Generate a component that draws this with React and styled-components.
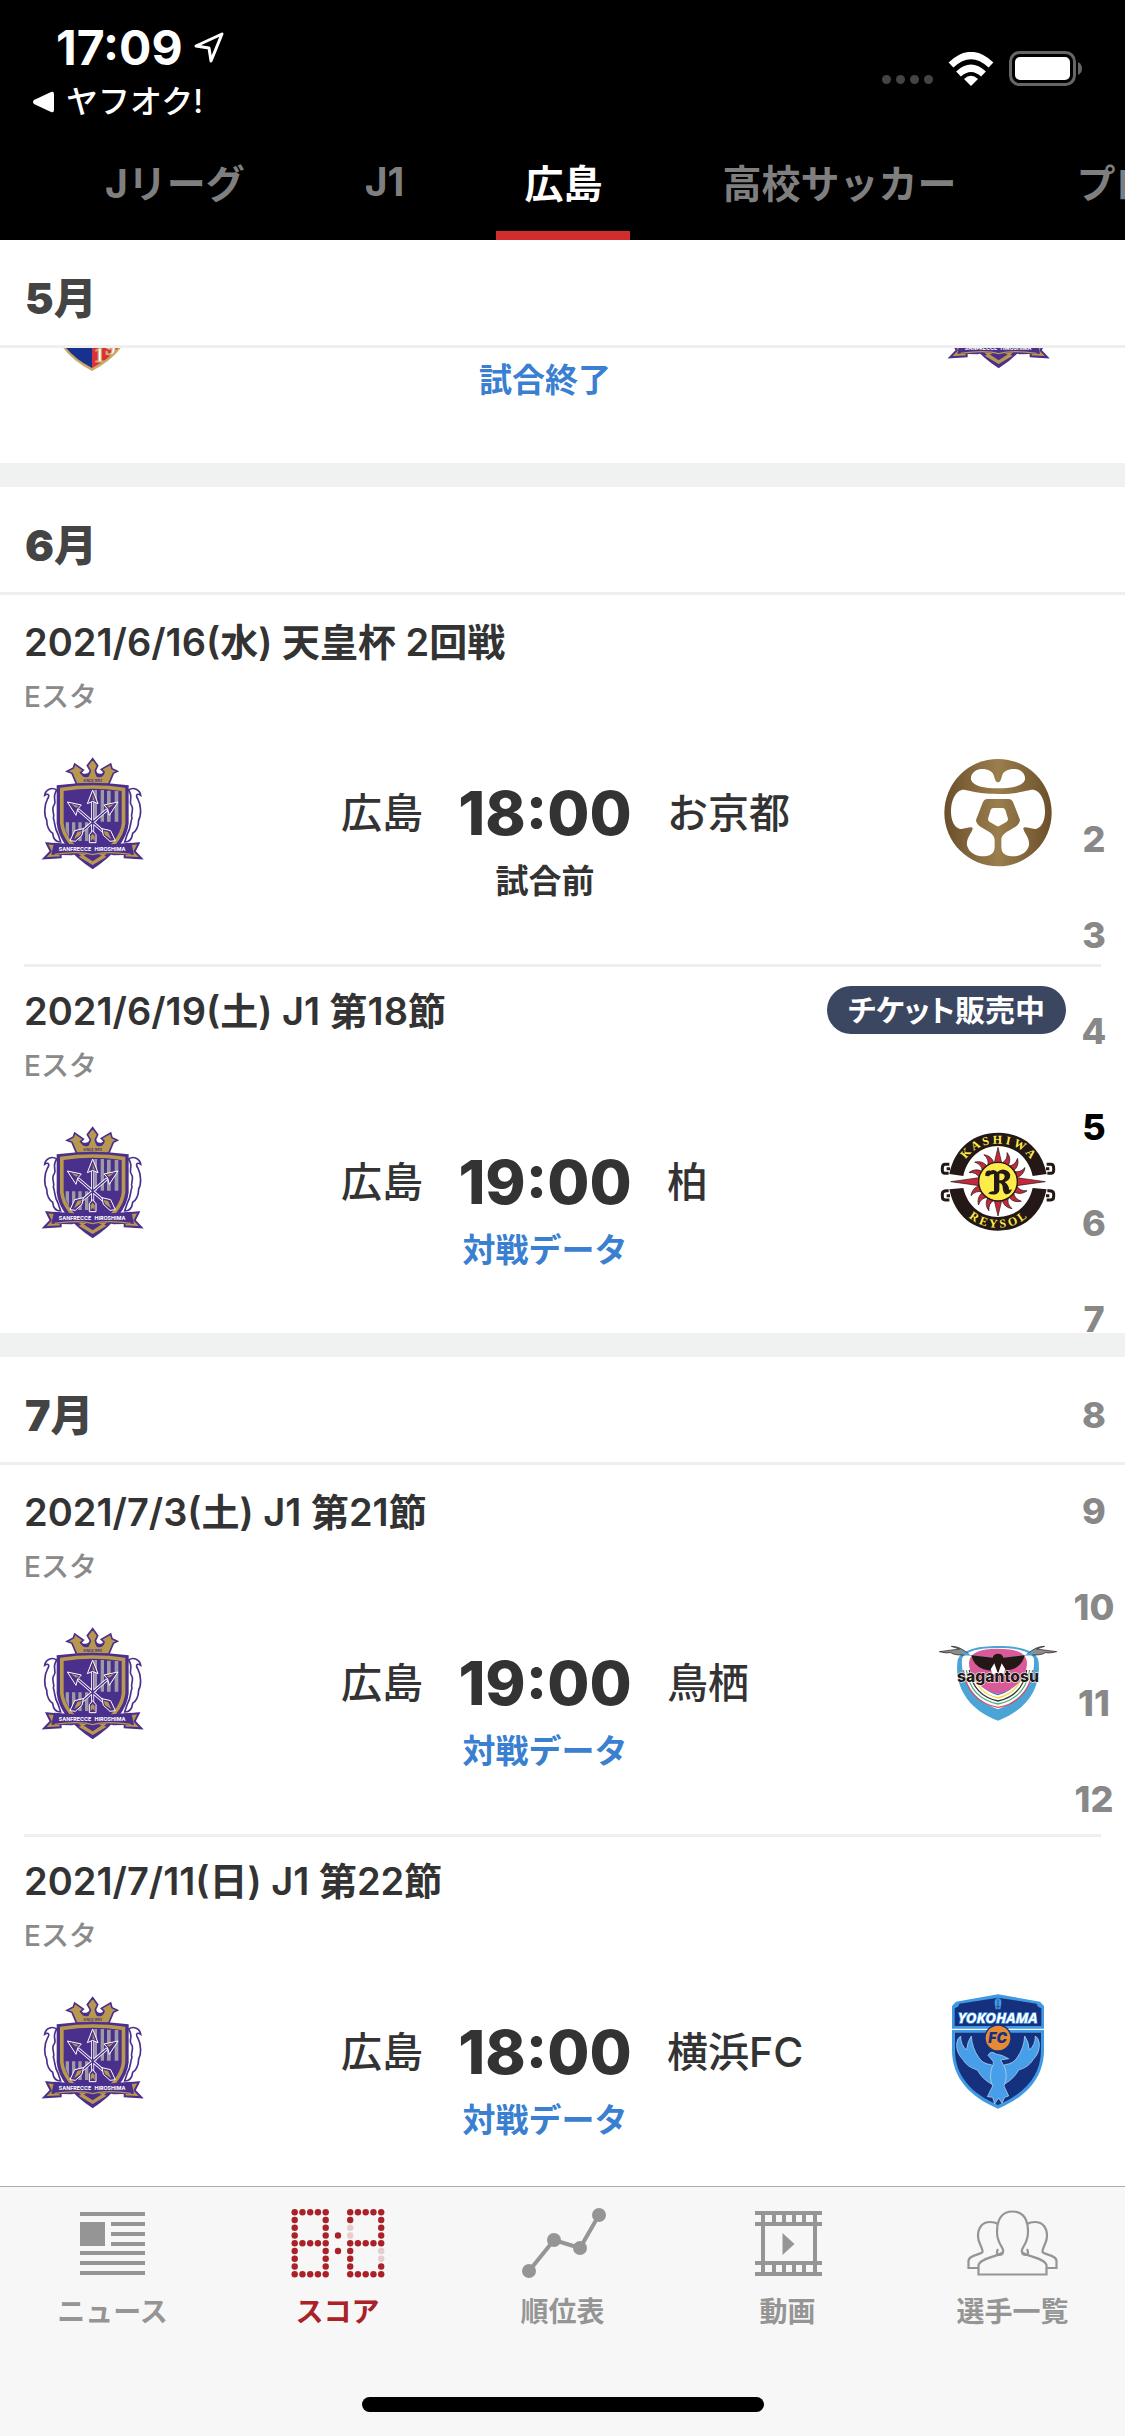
import React from "react";
import styled, { createGlobalStyle, css } from "styled-components";

const GlobalStyle = createGlobalStyle`
  * {
    box-sizing: border-box;
  }

  body {
    margin: 0;
    background: #fff;
    color: #333;
    font-family: Inter, "Noto Sans CJK JP", sans-serif;
  }

  button {
    border: 0;
    padding: 0;
    background: none;
    font-family: inherit;
    cursor: pointer;
  }

  a {
    text-decoration: none;
  }
`;

const Screen = styled.div`
  display: flex;
  flex-direction: column;
  height: 100vh;
  overflow: hidden;
`;

const TopBar = styled.header`
  flex: none;
  background: #000;
  color: #fff;
`;

const StatusBar = styled.div`
  display: flex;
  justify-content: space-between;
  height: 140px;
  padding: 20px 42px 0 32px;
`;

const StatusLeft = styled.div`
  display: flex;
  flex-direction: column;
`;

const Clock = styled.div`
  display: flex;
  align-items: center;
  gap: 10px;
  padding-left: 24px;
  font-size: 48px;
  font-weight: 700;
  line-height: 56px;
`;

const BackLink = styled.a`
  display: flex;
  align-items: center;
  gap: 12px;
  color: #fff;
  font-size: 32px;
  font-weight: 500;
  line-height: 52px;
`;

const StatusRight = styled.div`
  display: flex;
  align-items: flex-end;
  gap: 15px;
  height: 66px;
`;

const SignalDots = styled.div`
  display: flex;
  gap: 5px;
  padding-bottom: 2px;

  span {
    width: 9px;
    height: 9px;
    border-radius: 50%;
    background: #444;
  }
`;

const Tabs = styled.nav`
  display: flex;
  gap: 64px;
  height: 100px;
  padding-left: 77px;
  overflow: hidden;
`;

const Tab = styled.button`
  flex: none;
  padding: 0 28px 9px;
  border-bottom: 9px solid ${({ $active }) => ($active ? "#d22d2d" : "transparent")};
  color: ${({ $active }) => ($active ? "#fff" : "#7f7f7f")};
  font-size: 39px;
  font-weight: 700;
  white-space: nowrap;
`;

const Content = styled.main`
  position: relative;
  flex: 1;
  min-height: 0;
  overflow: hidden;
`;

const Month = styled.section`
  border-bottom: 24px solid #f0f2f1;
`;

const MonthTitle = styled.h2`
  height: 108px;
  margin: 0;
  padding: 6px 25px 0;
  border-bottom: 3px solid #efefef;
  color: #444;
  font-size: 43px;
  font-weight: 900;
  line-height: 104px;
`;

// the last match of the month is still partly scrolled under its title
const Scrolled = styled.div`
  display: flex;
  flex-direction: column;
  justify-content: flex-end;
  height: 115px;
  overflow: hidden;
`;

const MatchItem = styled.article`
  flex: none;
  height: 369px;
  margin: 0 24px;
  padding-right: 35px;
  border-top: 3px solid #efefef;

  &:first-of-type {
    border-top-color: transparent;
  }
`;

const MatchHeader = styled.div`
  display: flex;
  justify-content: space-between;
  align-items: center;
  height: 48px;
  margin-top: 19px;
`;

const MatchDate = styled.h3`
  margin: 0;
  padding-top: 2px;
  font-size: 38px;
  font-weight: 600;
  line-height: 48px;
`;

const Badge = styled.span`
  padding: 0 21px;
  border-radius: 24px;
  background: #3b4660;
  color: #fff;
  font-size: 30px;
  font-weight: 600;
  font-feature-settings: "palt";
  line-height: 48px;
`;

const Venue = styled.p`
  height: 32px;
  margin: 16px 0 0;
  color: #8a8a8a;
  font-size: 28px;
  font-weight: 500;
  line-height: 32px;
`;

const Versus = styled.div`
  display: grid;
  grid-template-columns: 120px 1fr 244px 1fr 120px;
  align-items: center;
  height: 120px;
  margin-top: 40px;
  padding: 0 8px;
`;

const TeamName = styled.span`
  font-size: 41px;
  font-weight: 500;
  line-height: 60px;
  text-align: ${({ $side }) => ($side === "home" ? "right" : "left")};
`;

const Kickoff = styled.strong`
  font-size: 61px;
  font-weight: 800;
  line-height: 72px;
  text-align: center;
`;

const statusText = css`
  display: block;
  font-size: 33px;
  font-weight: 600;
  line-height: 40px;
  text-align: center;
`;

const StatusLabel = styled.p`
  ${statusText}
  margin: 0;
`;

const StatusLink = styled.a`
  ${statusText}
  color: #3a7fd0;
`;

const StatusRow = styled.div`
  display: flex;
  justify-content: center;
  margin-top: -12px;
`;

const MonthIndex = styled.nav`
  position: absolute;
  top: 551px;
  right: 0;
  display: flex;
  flex-direction: column;
  width: 62px;
`;

const IndexButton = styled.button`
  height: 96px;
  color: ${({ $active }) => ($active ? "#000" : "#888")};
  font-size: 36px;
  font-weight: 800;
`;

const BottomBar = styled.footer`
  flex: none;
  display: flex;
  flex-direction: column;
  align-items: center;
  justify-content: space-between;
  height: 250px;
  padding: 20px 0 24px;
  border-top: 1px solid #aeaeae;
  background: #f7f7f7;
`;

const BottomTabs = styled.nav`
  display: flex;
  width: 100%;
`;

const BottomTab = styled.button`
  flex: 1;
  display: flex;
  flex-direction: column;
  align-items: center;
  gap: 13px;
  color: ${({ $active }) => ($active ? "#aa2127" : "#959595")};
  font-size: 28px;
  font-weight: 600;
  line-height: 40px;
`;

const HomeIndicator = styled.div`
  width: 402px;
  height: 15px;
  border-radius: 8px;
  background: #000;
`;

const CrestSvg = styled.svg`
  display: block;
  width: 120px;
  height: 120px;
`;

function HiroshimaCrest() {
  const wing =
    "M80 150C66 140 46 148 44 166C56 158 60 166 52 178C42 196 42 226 50 240C50 262 60 276 68 280C70 298 80 306 92 306L84 282C72 262 76 250 70 234C76 224 62 208 72 196C82 182 64 176 80 150Z";
  return (
    <CrestSvg viewBox="6 39 360 360">
      <g fill="#fff" stroke="#4b2f8c" strokeWidth="5">
        <path d={wing} />
        <path d={wing} transform="translate(376 0) scale(-1 1)" />
      </g>
      <path
        d="M188 56L203 77L196 92C200 108 212 108 220 100L222 96L214 88L242 72L246 86L262 94L250 100L236 133H140L126 100L111 94L130 84L134 72L160 90L152 98C160 108 176 108 181 92L172 77Z"
        fill="#b8984f"
        stroke="#4b2f8c"
        strokeWidth="5"
      />
      <path d="M152 98q6 18 24 12l6-14q-14 10-30 2zM224 98q-6 18-24 12l-6-14q14 10 30 2z" fill="#4b2f8c" />
      <text x="188" y="125" fill="#4b2f8c" fontSize="10" fontWeight="700" textAnchor="middle">
        SINCE 1992
      </text>
      <path d="M80 136Q188 120 296 136V250Q290 320 188 388Q86 320 80 250Z" fill="#4b2f8c" />
      <path d="M90 143Q188 129 286 143V250Q280 312 188 374Q96 312 90 250Z" fill="#b8984f" />
      <path d="M101 153Q188 140 275 153V250Q270 305 188 358Q106 305 101 250Z" fill="#4b2f8c" />
      <path
        d="M193 150h8v95h-8zM212 150h10v95h-10zM231 152h11v93h-11zM254 153h11v92h-11zM107 247h10v45l-10-22zM126 247h10v56h-10zM145 247h10v56h-10zM165 247h10v56h-10z"
        fill="#9c9ba3"
      />
      <g fill="none" stroke="#fff" strokeWidth="9" strokeLinecap="square">
        <path d="M188 190V304M148 212L222 276M228 212L154 276" />
      </g>
      <g fill="none" stroke="#4b2f8c" strokeWidth="4">
        <path d="M188 186V304M146 210L224 278M230 210L152 278" />
      </g>
      <g fill="#4b2f8c" stroke="#fff" strokeWidth="3">
        <path d="M188 150L204 191L188 184L172 191ZM112 186L154 195L143 207L138 226ZM264 186L222 195L233 207L238 226Z" />
        <path d="M178 308V284L188 272L198 284V308ZM120 302L134 272L160 266L156 286L136 304ZM256 302L242 272L216 266L220 286L240 304Z" />
      </g>
      <path
        d="M188 164l7 19-7-4zM124 192l22 6-8 5zM252 192l-22 6 8 5zM182 304v-16l6-6 6 6v16l-6-8zM132 298l10-22 13-3-4 12zM244 298l-10-22-13-3 4 12z"
        fill="#b8984f"
      />
      <path
        d="M50 310L92 314V352L42 355L62 334ZM326 310L284 314V352L334 355L314 334Z"
        fill="#b8984f"
        stroke="#4b2f8c"
        strokeWidth="6"
      />
      <path d="M72 308Q188 320 304 308L312 344L250 346Q222 334 188 350Q154 334 126 346L64 344Z" fill="#4b2f8c" />
      <path d="M74 343Q150 332 188 344Q226 332 302 343" fill="none" stroke="#b8984f" strokeWidth="4" />
      <path d="M146 350Q170 342 188 354Q206 342 230 350L188 375Z" fill="#b8984f" />
      <path d="M160 346Q176 342 188 352Q200 342 216 346L188 364Z" fill="#4b2f8c" />
      <g fill="#fff" fontSize="16" fontWeight="700" textAnchor="middle">
        <text x="135" y="333">SANFRECCE</text>
        <text x="240" y="333">HIROSHIMA</text>
      </g>
    </CrestSvg>
  );
}

function KyotoCrest() {
  return (
    <CrestSvg viewBox="54 39 360 360">
      <defs>
        <linearGradient id="bronze">
          <stop offset="0" stopColor="#6b4f2b" />
          <stop offset="0.5" stopColor="#9b7e4d" />
          <stop offset="1" stopColor="#6b4f2b" />
        </linearGradient>
      </defs>
      <circle cx="234" cy="218" r="161" fill="url(#bronze)" />
      <g fill="#fff">
        <path d="M182 87C202 86 218 92 222 108C225 120 228 127 234 127C240 127 243 120 246 108C250 92 266 86 286 87C306 90 317 104 315 119C308 138 276 145 234 145C192 145 160 138 153 119C151 104 162 90 182 87Z" />
        <path d="M125 150C142 147 158 162 234 162C310 162 326 147 343 150C364 156 375 184 375 214C375 240 366 262 350 266C336 270 314 256 310 265C309 276 330 292 327 316C320 346 286 352 268 348C250 344 244 336 244 318V300C244 270 298 268 300 240L280 188Q276 178 266 177H202Q192 178 188 188L168 240C170 268 224 270 224 300V318C224 336 218 344 200 348C182 352 148 346 141 316C138 292 159 276 158 265C154 256 132 270 118 266C102 262 93 240 93 214C93 184 104 156 125 150Z" />
        <path d="M220 204H248Q254 204 256 210L264 236Q264 242 260 245L239 257Q234 260 229 257L208 245Q204 242 204 236L212 210Q214 204 220 204Z" />
      </g>
    </CrestSvg>
  );
}

const flames = Array.from({ length: 16 }, (_, i) => i * 22.5);

function KashiwaCrest() {
  return (
    <CrestSvg viewBox="54 36 360 360">
      <g fill="none" stroke="#231815" strokeWidth="9">
        <path d="M88 163H76Q67 163 67 174V182Q67 190 80 190H86M80 176H90" />
        <path d="M380 163H392Q401 163 401 174V182Q401 190 388 190H382M388 176H378" />
        <path d="M88 270H76Q67 270 67 259V251Q67 242 80 242H86M80 257H90" />
        <path d="M380 270H392Q401 270 401 259V251Q401 242 388 242H382M388 257H378" />
      </g>
      <path d="M88 192C104 112 162 68 234 68C306 68 364 112 380 192L338 198C326 142 284 108 234 108C184 108 142 142 130 198Z" fill="#231815" />
      <path d="M88 238C104 318 162 362 234 362C306 362 364 318 380 238L338 234C326 288 284 321 234 321C184 321 142 288 130 234Z" fill="#231815" />
      <g fill="#c3283c" stroke="#231815" strokeWidth="2">
        {flames.map((angle, i) => (
          <path
            key={angle}
            transform={`rotate(${angle} 234 215)`}
            d={i % 4 === 0 ? "M223 158L234 112L245 158Z" : "M224 158Q236 144 226 124Q246 136 244 158Z"}
          />
        ))}
        <path d="M178 203L92 215L178 227ZM290 203L376 215L290 227Z" />
      </g>
      <circle cx="234" cy="215" r="58" fill="#fdeb4a" stroke="#231815" strokeWidth="4" />
      <path
        d="M196 198Q194 180 212 182Q222 176 232 186Q244 174 258 181Q274 188 270 202Q266 213 254 216Q266 224 268 240L276 238Q270 256 256 252Q248 246 248 230Q246 220 238 219V240Q238 248 230 252Q216 256 204 250Q214 242 222 244V192Q212 192 206 199ZM238 191V211Q252 212 254 200Q254 189 238 191Z"
        fill="#231815"
        fillRule="evenodd"
      />
      <path id="kashiwa-top" d="M121 184C136 128 180 101 234 101C288 101 332 128 347 184" fill="none" />
      <path id="kashiwa-bottom" d="M100 246C122 320 174 353 234 353C294 353 346 320 368 246" fill="none" />
      <g fill="#fdeb4a" fontFamily="Liberation Serif, serif" fontSize="36" fontWeight="700" textAnchor="middle">
        <text>
          <textPath href="#kashiwa-top" startOffset="50%">
            K A S H I W A
          </textPath>
        </text>
        <text>
          <textPath href="#kashiwa-bottom" startOffset="50%">
            R E Y S O L
          </textPath>
        </text>
      </g>
    </CrestSvg>
  );
}

function TosuCrest() {
  const chevrons = [
    ["#2f80bd", 224],
    ["#f0dc4e", 234],
    ["#333", 243],
    ["#4fae7e", 252],
    ["#e0506a", 262],
  ];
  return (
    <CrestSvg viewBox="54 9 360 360">
      <path d="M234 78C292 78 344 88 355 120C366 196 326 268 234 302C142 268 102 196 113 120C124 88 176 78 234 78Z" fill="#4aa5d6" />
      <path d="M234 84C286 84 332 92 342 116C346 180 312 238 234 268C156 238 122 180 126 116C136 92 182 84 234 84Z" fill="#fff" />
      <g fill="none" strokeWidth="4">
        {chevrons.map(([color, y], i) => (
          <path
            key={color}
            d={`M${166 - i * 9} 150Q${176 - i * 8} ${y - 16} 234 ${y}Q${292 + i * 8} ${y - 16} ${302 + i * 9} 150`}
            stroke={color}
          />
        ))}
      </g>
      <path d="M234 86C288 86 320 98 321 130C320 172 286 212 234 222C182 212 148 172 147 130C148 98 180 86 234 86Z" fill="#d95a98" />
      <g fill="#8f8b8b" stroke="#231815" strokeWidth="2">
        <path d="M148 104Q120 78 94 79L118 87L58 95Q80 101 92 98Q104 108 148 104Z" />
        <path d="M320 104Q348 78 374 79L350 87L410 95Q388 101 376 98Q364 108 320 104Z" />
      </g>
      <path d="M116 90Q140 96 150 105L208 112L222 118Q180 110 132 104ZM352 90Q328 96 318 105L260 112L246 118Q288 110 336 104Z" fill="#4aa5d6" />
      <path
        d="M154 106L218 113Q221 101 234 101Q247 101 250 113L314 106Q308 136 278 148L256 152L244 138L234 162L224 138L212 152L190 148Q160 136 154 106Z"
        fill="#231815"
      />
      <path d="M212 148L223 130L232 156L234 170L236 156L245 130L256 148L250 162H218Z" fill="#fff" />
      <text x="234" y="186" fill="#231815" stroke="#fff" strokeWidth="3" paintOrder="stroke" fontSize="47" fontWeight="800" textAnchor="middle">
        sagantosu
      </text>
    </CrestSvg>
  );
}

function YokohamaCrest() {
  const wing =
    "M204 300L184 312Q156 296 142 270Q112 262 98 238Q78 218 80 190Q82 174 92 168Q92 196 110 210Q112 184 124 168Q126 204 146 232Q158 252 184 254L196 262Z";
  return (
    <CrestSvg viewBox="24 36 360 360">
      <path d="M204 43L330 65L342 78V146H66V78L78 65Z" fill="#3f9ae3" />
      <path d="M204 53L320 71Q322 82 334 84V138H74V84Q86 82 88 71Z" fill="#15317e" />
      <path d="M66 150H342V210C342 292 290 350 204 386C118 350 66 292 66 210Z" fill="#3f9ae3" />
      <path d="M75 158H333V210C333 286 286 340 204 375C122 340 75 286 75 210Z" fill="#15317e" />
      <path d="M197 88L194 70Q193 55 204 54Q215 55 214 70L211 88Z" fill="#3f9ae3" />
      <path d="M204 58V90M199 80h10" stroke="#15317e" strokeWidth="2" />
      <g fill="#469fe8" stroke="#c9dcf2" strokeWidth="2">
        <path d={wing} />
        <path d={wing} transform="translate(408 0) scale(-1 1)" />
        <path d="M174 226Q182 210 198 222Q216 224 236 236L212 240L224 262Q234 290 222 318L236 348L224 352L216 370L206 354L194 372L188 352L172 350L188 318Q176 292 186 262Q194 246 186 240Z" />
      </g>
      <circle cx="204" cy="174" r="39" fill="#e68a35" stroke="#15317e" strokeWidth="4" />
      <text x="203" y="189" fill="#15317e" fontSize="42" fontStyle="italic" fontWeight="900" textAnchor="middle">
        FC
      </text>
      <text x="203" y="129" fill="#fff" stroke="#3f9ae3" strokeWidth="4" paintOrder="stroke" fontStyle="italic" fontWeight="700" fontFamily="Noto Sans, sans-serif" fontSize="44" textAnchor="middle">
        YOKOHAMA
      </text>
    </CrestSvg>
  );
}

function TokyoCrest() {
  return (
    <CrestSvg viewBox="0 0 120 120">
      <path d="M60 20L98 34V68Q98 99 60 119Q22 99 22 68V34Z" fill="#c9a964" />
      <path d="M60 23L96 36V68Q96 97 60 116Z" fill="#d9303a" />
      <path d="M60 23L24 36V68Q24 97 60 116Z" fill="#17318f" />
      <text x="62" y="110" fill="#fff" stroke="#c9a964" strokeWidth="1" fontFamily="Liberation Serif, serif" fontSize="22" fontWeight="700">
        1
      </text>
      <text x="73" y="103" fill="#fff" stroke="#c9a964" strokeWidth="1" fontFamily="Liberation Serif, serif" fontSize="22" fontWeight="700">
        9
      </text>
    </CrestSvg>
  );
}

function LocationIcon() {
  return (
    <svg width="32" height="34" viewBox="0 0 32 34" fill="none" stroke="#fff" strokeWidth="3" strokeLinejoin="round">
      <path d="M29 3L3 15L16 17L18 30Z" />
    </svg>
  );
}

function BackIcon() {
  return (
    <svg width="22" height="22" viewBox="0 0 22 22" fill="#fff">
      <path d="M19 1Q22 0 22 3V19Q22 22 19 21L2 13Q0 11 2 9Z" />
    </svg>
  );
}

function WifiIcon() {
  return (
    <svg width="46" height="34" viewBox="0 0 46 34" fill="none" stroke="#fff" strokeWidth="7">
      <path d="M3 13Q23 -6 43 13" />
      <path d="M10.500 22Q23 10.500 35.500 22" />
      <path d="M23 34L16 27Q23 20.500 30 27Z" fill="#fff" stroke="none" />
    </svg>
  );
}

function BatteryIcon() {
  return (
    <svg width="74" height="36" viewBox="0 0 74 36">
      <rect x="1.500" y="2.500" width="64" height="32" rx="9" fill="none" stroke="#666" strokeWidth="3" />
      <rect x="6" y="7" width="55" height="23" rx="5" fill="#fff" />
      <path d="M69 12Q73 14 73 18.500Q73 23 69 25Z" fill="#666" />
    </svg>
  );
}

function NewsIcon() {
  return (
    <svg width="96" height="72" viewBox="0 0 96 72" fill="currentColor">
      <path d="M15 5h65v4H15zM15 15h25v24H15zM46 15h34v4H46zM46 25h34v4H46zM46 35h34v4H46zM15 44h65v4H15zM15 54h65v4H15zM15 64h65v4H15z" />
    </svg>
  );
}

// seven segment digit on a 5 x 9 grid of dots
function DotDigit({ x, off = [] }) {
  const dots = [];
  for (let row = 0; row < 9; row += 1) {
    for (let col = 0; col < 5; col += 1) {
      if (row % 4 === 0 || col % 4 === 0) {
        dots.push(
          <circle
            key={`${col}-${row}`}
            cx={x + col * 7.75}
            cy={5.3 + row * 7.75}
            r="3.200"
            opacity={off.includes(`${col}-${row}`) ? 0.2 : 1}
          />
        );
      }
    }
  }
  return dots;
}

function ScoreIcon() {
  return (
    <svg width="96" height="72" viewBox="0 0 96 72" fill="currentColor">
      <DotDigit x={4.7} />
      <circle cx="48" cy="28.500" r="3.200" />
      <circle cx="48" cy="44" r="3.200" />
      <DotDigit x={60.2} off={["0-2", "0-3", "4-5", "4-6"]} />
    </svg>
  );
}

function RankingIcon() {
  return (
    <svg width="96" height="72" viewBox="0 0 96 72" fill="currentColor">
      <path d="M14 64L39 33L65 41L84 8" fill="none" stroke="currentColor" strokeWidth="4" />
      <circle cx="14" cy="64" r="7" />
      <circle cx="39" cy="33" r="7" />
      <circle cx="65" cy="41" r="7" />
      <circle cx="84" cy="8" r="7" />
    </svg>
  );
}

function MovieIcon() {
  return (
    <svg width="96" height="72" viewBox="0 0 96 72" fill="currentColor">
      <path d="M15 4h67v4H15zM15 15h67v4H15zM15 54h67v4H15zM15 65h67v4H15zM21 4h4v64h-4zM73 4h4v64h-4z" />
      <path d="M32 6h4v11h-4zM42 6h4v11h-4zM52 6h4v11h-4zM62 6h4v11h-4zM32 56h4v11h-4zM42 56h4v11h-4zM52 56h4v11h-4zM62 56h4v11h-4z" />
      <path d="M42.500 26L54.500 37L42.500 48Z" />
    </svg>
  );
}

function PlayersIcon() {
  const side = "M34 17C31 15 28 15 26 15C18 15 14 21 14 29C14 36 19 41 18.500 45C16 48 4.500 48 4.500 54V61H14M34 42Q32 46 34 48Q38 48 39 46";
  return (
    <svg width="97" height="72" viewBox="0 0 97 72" fill="none" stroke="currentColor" strokeWidth="2.200">
      <path d="M14.500 67.500V58C16 51 36 49 39 45C41 41 33 38 33 25C33 12 38 4.500 48.500 4.500C59 4.500 64 12 64 25C64 38 56 41 58 45C61 49 81 51 82.500 58V67.500Z" />
      <path d={side} />
      <path d={side} transform="translate(97 0) scale(-1 1)" />
    </svg>
  );
}

function Match({ date, venue, badge, home, away, time, status, link, HomeCrest, AwayCrest }) {
  return (
    <MatchItem>
      <MatchHeader>
        <MatchDate>{date}</MatchDate>
        {badge && <Badge>{badge}</Badge>}
      </MatchHeader>
      <Venue>{venue}</Venue>
      <Versus>
        <HomeCrest />
        <TeamName $side="home">{home}</TeamName>
        <Kickoff>{time}</Kickoff>
        <TeamName $side="away">{away}</TeamName>
        <AwayCrest />
      </Versus>
      <StatusRow>
        {link ? <StatusLink href="#match">{link}</StatusLink> : <StatusLabel>{status}</StatusLabel>}
      </StatusRow>
    </MatchItem>
  );
}

const categories = ["Jリーグ", "J1", "広島", "高校サッカー", "プロ"];
const months = [2, 3, 4, 5, 6, 7, 8, 9, 10, 11, 12];

const schedule = [
  {
    month: "6月",
    matches: [
      {
        date: "2021/6/16(水) 天皇杯 2回戦",
        time: "18:00",
        away: "お京都",
        status: "試合前",
        AwayCrest: KyotoCrest,
      },
      {
        date: "2021/6/19(土) J1 第18節",
        badge: "チケット販売中",
        time: "19:00",
        away: "柏",
        link: "対戦データ",
        AwayCrest: KashiwaCrest,
      },
    ],
  },
  {
    month: "7月",
    matches: [
      {
        date: "2021/7/3(土) J1 第21節",
        time: "19:00",
        away: "鳥栖",
        link: "対戦データ",
        AwayCrest: TosuCrest,
      },
      {
        date: "2021/7/11(日) J1 第22節",
        time: "18:00",
        away: "横浜FC",
        link: "対戦データ",
        AwayCrest: YokohamaCrest,
      },
    ],
  },
];

const bottomTabs = [
  { label: "ニュース", Icon: NewsIcon },
  { label: "スコア", Icon: ScoreIcon },
  { label: "順位表", Icon: RankingIcon },
  { label: "動画", Icon: MovieIcon },
  { label: "選手一覧", Icon: PlayersIcon },
];

const App = () => (
  <>
    <GlobalStyle />
    <Screen>
      <TopBar>
        <StatusBar>
          <StatusLeft>
            <Clock>
              17:09
              <LocationIcon />
            </Clock>
            <BackLink href="#back">
              <BackIcon />
              ヤフオク!
            </BackLink>
          </StatusLeft>
          <StatusRight>
            <SignalDots>
              <span />
              <span />
              <span />
              <span />
            </SignalDots>
            <WifiIcon />
            <BatteryIcon />
          </StatusRight>
        </StatusBar>
        <Tabs>
          {categories.map((name) => (
            <Tab key={name} $active={name === "広島"}>
              {name}
            </Tab>
          ))}
        </Tabs>
      </TopBar>

      <Content>
        <Month>
          <MonthTitle>5月</MonthTitle>
          <Scrolled>
            <Match link="試合終了" HomeCrest={TokyoCrest} AwayCrest={HiroshimaCrest} />
          </Scrolled>
        </Month>
        {schedule.map(({ month, matches }) => (
          <Month key={month}>
            <MonthTitle>{month}</MonthTitle>
            {matches.map((match) => (
              <Match key={match.date} venue="Eスタ" home="広島" HomeCrest={HiroshimaCrest} {...match} />
            ))}
          </Month>
        ))}
        <MonthIndex>
          {months.map((month) => (
            <IndexButton key={month} $active={month === 5}>
              {month}
            </IndexButton>
          ))}
        </MonthIndex>
      </Content>

      <BottomBar>
        <BottomTabs>
          {bottomTabs.map(({ label, Icon }) => (
            <BottomTab key={label} $active={label === "スコア"}>
              <Icon />
              {label}
            </BottomTab>
          ))}
        </BottomTabs>
        <HomeIndicator />
      </BottomBar>
    </Screen>
  </>
);

export default App;
